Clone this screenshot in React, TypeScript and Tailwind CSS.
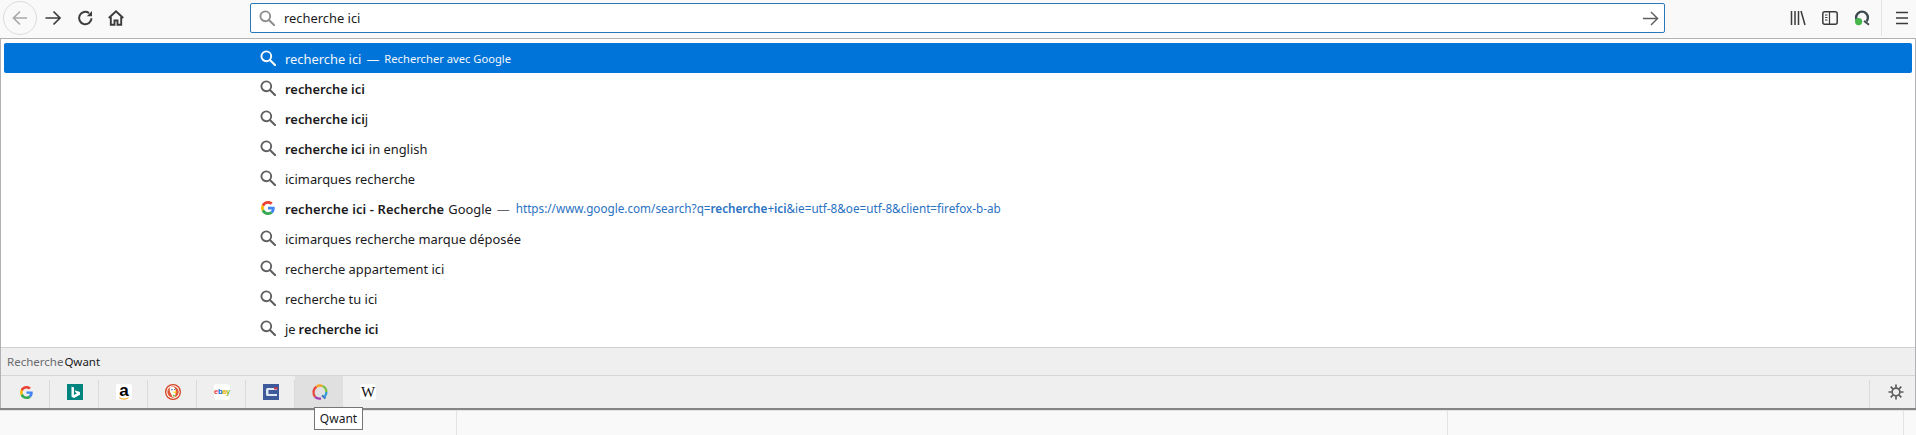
import React from "react";

function Mag({ white = false, cls = "" }: { white?: boolean; cls?: string }) {
  return (
    <svg viewBox="0 0 16 16" className={`w-4 h-4 shrink-0 ${cls}`} fill="none" stroke={white ? "#ffffff" : "#5f5f62"} strokeWidth="1.9">
      <circle cx="6.3" cy="6.3" r="4.9" />
      <path d="M9.900 9.900 15 15" strokeLinecap="round" strokeWidth="2.100" />
    </svg>
  );
}

function GoogleG({ cls = "w-4 h-4" }: { cls?: string }) {
  return (
    <svg viewBox="0 0 48 48" className={`shrink-0 ${cls}`}>
      <path fill="#EA4335" d="M24 9.500c3.500 0 6.700 1.300 9.200 3.400l6.900-6.900C35.900 2.300 30.300 0 24 0 14.600 0 6.500 5.400 2.600 13.200l8 6.200C12.500 13.600 17.800 9.500 24 9.500z" />
      <path fill="#4285F4" d="M47 24.500c0-1.600-.2-3.200-.5-4.500H24v9h12.900c-.6 3-2.300 5.500-4.800 7.200l7.700 6C44.300 38 47 31.800 47 24.500z" />
      <path fill="#FBBC05" d="M10.600 28.600c-.5-1.400-.8-3-.8-4.600s.3-3.200.8-4.600l-8-6.200C.9 16.500 0 20.100 0 24s.9 7.500 2.600 10.800l8-6.200z" />
      <path fill="#34A853" d="M24 48c6.500 0 11.900-2.100 15.800-5.800l-7.700-6c-2.100 1.400-4.900 2.300-8.100 2.300-6.200 0-11.500-4.200-13.400-9.800l-8 6.200C6.500 42.600 14.600 48 24 48z" />
    </svg>
  );
}

function Row({ children, icon, selected = false }: { children: React.ReactNode; icon?: React.ReactNode; selected?: boolean }) {
  return (
    <div className={`h-[30px] flex items-center pl-[256px] mx-[3px] rounded-[2px] ${selected ? "bg-[#0074d8] text-[#f2f7fc]" : "text-[#1a1a1d]"}`}>
      <div className="w-[25px] shrink-0 flex items-center">{icon ?? <Mag white={selected} />}</div>
      <div className="flex items-center whitespace-nowrap pt-[2px] text-[12.900px]">{children}</div>
    </div>
  );
}

function Engine({ children, hover = false, sep = true }: { children: React.ReactNode; hover?: boolean; sep?: boolean }) {
  return (
    <>
      <div className={`w-[48px] h-[32px] flex items-center justify-center shrink-0 ${hover ? "bg-[#e0e0e0] pl-[1px]" : "pl-[2px]"}`}>
        {children}
      </div>
      <div className={`w-[1px] h-[28px] self-end shrink-0 ${sep ? "bg-[#dadada]" : ""}`} />
    </>
  );
}

export default function App() {
  return (
    <div className="relative w-[1916px] h-[435px] overflow-hidden bg-[#f9f9fa] font-['Noto_Sans','Open_Sans',sans-serif] text-[13px] leading-none">
      {/* toolbar */}
      <div className="h-[38px] flex items-center bg-[#f9f9fa] pb-[2px]">
        <div className="flex items-center pl-[3px] w-[250px] shrink-0">
          <div className="w-[34px] h-[34px] rounded-full border border-[#dcdcde] flex items-center justify-center">
            <svg viewBox="0 0 18 18" className="w-[18px] h-[18px]" fill="none" stroke="#a9a9ab" strokeWidth="1.700">
              <path d="M16 9H2.500M9 2.500 2.500 9 9 15.500" />
            </svg>
          </div>
          <svg viewBox="0 0 18 18" className="w-[18px] h-[18px] ml-[7px]" fill="none" stroke="#3c3c3f" strokeWidth="1.700">
            <path d="M1.500 9H15.500M9.500 2.500 16 9 9.500 15.500" />
          </svg>
          <svg viewBox="0 0 16 16" className="w-[16px] h-[16px] ml-[15px]" fill="none" stroke="#3c3c3f" strokeWidth="2">
            <path d="M14.500 8.300A6.200 6.200 0 1 1 12 3.100" />
            <path d="M15 1v5.200H9.800z" fill="#3c3c3f" stroke="none" />
          </svg>
          <svg viewBox="0 0 16 16" className="w-[16px] h-[16px] ml-[15px]" fill="none" stroke="#3c3c3f" strokeWidth="1.900">
            <path d="M.8 8 8 1.300 15.200 8" />
            <path d="M2.800 7v7.800h3.700v-4.300h3v4.300h3.700V7" />
          </svg>
        </div>
        <div className="w-[1415px] h-[30px] bg-white border border-[#2a78b8] rounded-[2px] flex items-center pl-[8px] pr-[5px] text-[#1a1a1d]">
          <Mag cls="opacity-70" />
          <span className="ml-[9px] pt-[1px] text-[12.900px]">recherche ici</span>
          <svg viewBox="0 0 18 18" className="w-[17px] h-[17px] ml-auto" fill="none" stroke="#5f5f62" strokeWidth="1.500">
            <path d="M1 9H16.500M9.500 2 16.500 9 9.500 16" />
          </svg>
        </div>
        <div className="flex items-center ml-[125px]">
          <svg viewBox="0 0 16 16" className="w-4 h-4" fill="none" stroke="#3c3c3f" strokeWidth="1.500">
            <path d="M1.500 1v14M5 1v14M8.500 1v14M11 1l4 14" />
          </svg>
          <svg viewBox="0 0 16 16" className="w-4 h-4 ml-[16px]" fill="none" stroke="#3c3c3f" strokeWidth="1.500">
            <rect x=".8" y="1.800" width="14.400" height="12.400" rx="2" />
            <path d="M7.500 2v12M3 5h2.500M3 7.500h2.500M3 10h2.500" strokeWidth="1.200" />
          </svg>
          <svg viewBox="0 0 16 16" className="w-4 h-4 ml-[16px]" fill="none">
            <path d="M3.600 11.500A5.900 5.900 0 1 1 12.400 11.500" stroke="#3a4a4e" strokeWidth="2.400" />
            <path d="M10 11l5 3.800" stroke="#3a4a4e" strokeWidth="1.800" />
            <circle cx="4.600" cy="11.600" r="3.600" fill="#45b649" />
          </svg>
          <div className="w-[1px] h-[36px] bg-[#e4e4e6] ml-[11px]" />
          <svg viewBox="0 0 16 16" className="w-4 h-4 ml-[12px]" fill="none" stroke="#3c3c3f" strokeWidth="1.700">
            <path d="M2 2.500h12M2 8h12M2 13.500h12" />
          </svg>
        </div>
      </div>

      {/* panel */}
      <div className="bg-white border-t border-l border-r border-[#b2b2b4] shadow-[0_2px_1px_#858585]">
        <div className="pt-[4px] pb-[4px]">
          <Row selected>
            <span>recherche ici</span>
            <span className="ml-[5px]">—</span>
            <span className="ml-[5px] text-[11.200px]">Rechercher avec Google</span>
          </Row>
          <Row><b className="font-semibold">recherche ici</b></Row>
          <Row><b className="font-semibold">recherche ici</b>j</Row>
          <Row><b className="font-semibold">recherche ici</b><span className="ml-[4px]">in english</span></Row>
          <Row>icimarques recherche</Row>
          <Row icon={<GoogleG cls="w-[14px] h-[14px] ml-[1px]" />}>
            <b className="font-semibold tracking-[0.12px]">recherche ici - Recherche</b>
            <span className="ml-[4px]">Google</span>
            <span className="ml-[5px] text-[#66666a]">—</span>
            <span className="ml-[6px] text-[11.700px] text-[#2a72c2]">
              https://www.google.com/search?q=<b className="font-semibold">recherche</b>+<b className="font-semibold">ici</b>&amp;ie=utf-8&amp;oe=utf-8&amp;client=firefox-b-ab
            </span>
          </Row>
          <Row>icimarques recherche marque déposée</Row>
          <Row>recherche appartement ici</Row>
          <Row>recherche tu ici</Row>
          <Row>je <b className="font-semibold ml-[3px]">recherche ici</b></Row>
        </div>
        <div className="h-[28px] bg-[#efefef] border-t border-[#d0d0d0] flex items-center pl-[6px] text-[11.500px]">
          <span className="text-[#6b6b6e]">Recherche</span>
          <span className="ml-[1px] text-[#1a1a1d]">Qwant</span>
        </div>
        <div className="h-[33px] bg-[#efefef] border-t border-[#d6d6d6] flex items-center">
          <Engine><GoogleG cls="w-[13px] h-[13px]" /></Engine>
          <Engine>
            <div className="w-4 h-4 bg-[#00847d] flex items-center justify-center">
              <svg viewBox="0 0 16 16" className="w-4 h-4">
                <path fill="#fff" d="M4.500 2.500 7 3.400v7.500l3-1.700-1.400-.7-.9-2.300 5.300 1.900v2.700L7 14l-2.500-1.300z" />
              </svg>
            </div>
          </Engine>
          <Engine>
            <div className="w-4 h-4 bg-white rounded-[2px] flex flex-col items-center">
              <span className="text-[17px] font-bold text-black leading-[13px] font-['Liberation_Sans',sans-serif]">a</span>
              <svg viewBox="0 0 16 4" className="w-4 h-1">
                <path d="M1.500 .8C5 3.500 10 3.500 14 1" stroke="#f90" strokeWidth="1.300" fill="none" />
              </svg>
            </div>
          </Engine>
          <Engine>
            <svg viewBox="0 0 16 16" className="w-4 h-4">
              <circle cx="8" cy="8" r="8" fill="#d2401f" />
              <circle cx="8" cy="8" r="6.700" fill="#fff" />
              <circle cx="8" cy="8" r="5.700" fill="#de5833" />
              <path d="M5 3.400c2-1.200 4.700-.5 5.200 1.600.8 1.200.8 3.400.2 5.200l-.4 3-2.500-.1C7 11 5.500 9.500 5 7.500c-.3-1.300-.5-3 0-4.100z" fill="#fff" />
              <circle cx="7" cy="5.700" r=".7" fill="#2d4f8e" />
              <circle cx="9.600" cy="5.500" r=".6" fill="#2d4f8e" />
              <path d="M6.800 8 11.500 7.200l-.5 2z" fill="#fdd20a" />
              <path d="M7.500 10.500l3 1-1.800 1.500z" fill="#65bc46" />
            </svg>
          </Engine>
          <Engine>
            <div className="w-4 h-4 bg-white rounded-[3px] flex items-center justify-center">
              <span className="text-[7.500px] font-bold tracking-[-0.3px] font-['Liberation_Sans',sans-serif]">
                <span className="text-[#e53238]">e</span>
                <span className="text-[#0064d2]">b</span>
                <span className="text-[#f5af02]">a</span>
                <span className="text-[#86b817]">y</span>
              </span>
            </div>
          </Engine>
          <Engine>
            <svg viewBox="0 0 16 16" className="w-4 h-4">
              <rect width="16" height="16" fill="#3e5a9a" />
              <path d="M14 4H4.500A1.500 1.500 0 0 0 3 5.500v5A1.500 1.500 0 0 0 4.500 12H14v-2H5.500V6H14z" fill="#dfe7f2" />
              <rect x="11" y="3.200" width="3.500" height="2.200" fill="#c8384a" />
            </svg>
          </Engine>
          <Engine hover sep={false}>
            <svg viewBox="0 0 16 16" className="w-4 h-4" fill="none" strokeWidth="2.300">
              <path d="M3 12.800A6.500 6.500 0 0 1 1.600 8 6.400 6.400 0 0 1 4.500 2.700" stroke="#e8483f" />
              <path d="M4.500 2.700A6.400 6.400 0 0 1 10.500 2" stroke="#f5a623" />
              <path d="M10.500 2A6.400 6.400 0 0 1 14.400 8" stroke="#7bc043" />
              <path d="M14.400 8c0 1.800-.6 3.300-1.800 4.500" stroke="#2f9fd8" />
              <path d="M10 11.500l3.500 3" stroke="#2f6fc8" strokeWidth="1.800" />
              <path d="M3 12.800A6.400 6.400 0 0 0 9 14.300" stroke="#a03fb0" />
            </svg>
          </Engine>
          <Engine sep={false}>
            <div className="w-4 h-4 bg-white rounded-[3px] flex items-center justify-center mr-[2px]">
              <span className="text-[15px] font-['Liberation_Serif',serif] text-[#111]">W</span>
            </div>
          </Engine>
          <div className="ml-auto w-[46px] h-[32px] flex items-center justify-center">
            <div className="w-[1px] h-[28px] bg-[#dadada] self-end" />
            <svg viewBox="0 0 16 16" className="w-4 h-4 ml-[18px] mr-auto" fill="none" stroke="#5a5a5d" strokeWidth="1.700">
              <circle cx="8" cy="8" r="3.900" />
              <path d="M8 .5v3M8 12.500v3M.5 8h3M12.500 8h3M2.700 2.700l2.200 2.200M11.100 11.100l2.200 2.200M13.300 2.700l-2.200 2.200M4.900 11.100l-2.200 2.200" />
            </svg>
          </div>
        </div>
      </div>

      {/* page underneath */}
      <div className="flex h-[26px] mt-[2px]">
        <div className="w-[457px] border-r border-[#e3e3e5]" />
        <div className="w-[991px] border-r border-[#e3e3e5]" />
        <div className="w-[456px] border-r border-[#e3e3e5]" />
      </div>

      {/* tooltip */}
      <div className="absolute left-[314px] top-[407px] w-[49px] h-[23px] bg-white border border-[#767676] flex items-center justify-center text-[12px] text-[#1a1a1d]">
        Qwant
      </div>
    </div>
  );
}
